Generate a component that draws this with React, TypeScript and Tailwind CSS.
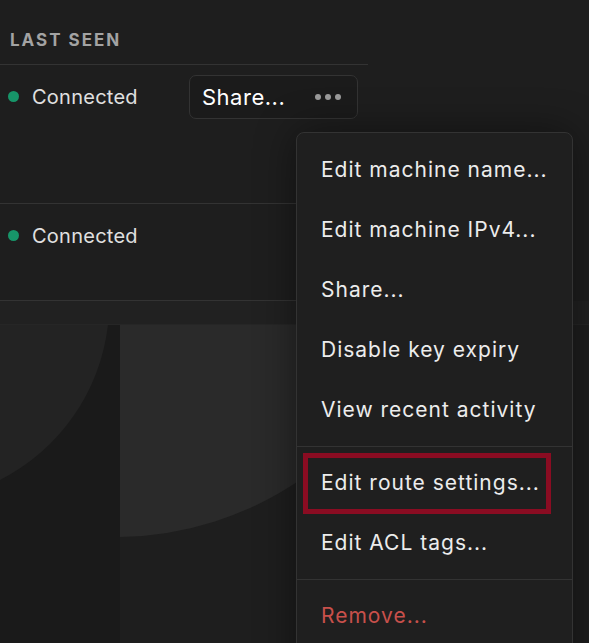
import React from "react";

const items1 = [
  "Edit machine name...",
  "Edit machine IPv4...",
  "Share...",
  "Disable key expiry",
  "View recent activity",
];

function Item({ children, red }: { children: React.ReactNode; red?: boolean }) {
  return (
    <div
      className={`h-[60px] flex items-center pl-[24px] text-[21px] tracking-[1px] ${
        red ? "text-[#c8504b]" : "text-[#ececec]"
      }`}
    >
      {children}
    </div>
  );
}

export default function App() {
  return (
    <div
      className="relative w-[589px] h-[643px] overflow-hidden bg-[#1e1e1e]"
      style={{ fontFamily: "Inter, 'Noto Sans', sans-serif" }}
    >
      <div className="w-[368px]">
        <div className="h-[65px] flex items-end pb-[11px] pl-[10px] border-b border-[#333333]">
          <span className="text-[17px] font-bold tracking-[2px] text-[#a3a3a3]">LAST SEEN</span>
        </div>
        <div className="h-[139px] border-b border-[#333333] flex items-start pt-[10px] pl-[8px]">
          <div className="flex items-center h-[43px] gap-[13px] w-[181px]">
            <span className="w-[11px] h-[11px] rounded-full bg-[#179569]" />
            <span className="text-[20px] tracking-[0.25px] text-[#e0e0e0]">Connected</span>
          </div>
          <div className="flex items-center h-[44px] w-[169px] rounded-[7px] border border-[#333333] bg-[#1b1b1b] pl-[12px] pr-[16px] justify-between">
            <span className="text-[22px] tracking-[0.5px] text-white">Share...</span>
            <span className="flex gap-[4px]">
              <span className="w-[6px] h-[6px] rounded-full bg-[#9b9b9b]" />
              <span className="w-[6px] h-[6px] rounded-full bg-[#9b9b9b]" />
              <span className="w-[6px] h-[6px] rounded-full bg-[#9b9b9b]" />
            </span>
          </div>
        </div>
        <div className="h-[97px] border-b border-[#333333] flex items-start pt-[10px] pl-[8px]">
          <div className="flex items-center h-[43px] gap-[13px]">
            <span className="w-[11px] h-[11px] rounded-full bg-[#179569]" />
            <span className="text-[20px] tracking-[0.25px] text-[#e0e0e0]">Connected</span>
          </div>
        </div>
      </div>
      <div className="h-[24px] bg-[#212121] border-b border-[#262626]" />
      <svg width="589" height="320" className="block">
        <rect x="0" y="0" width="589" height="320" fill="#1e1e1e" />
        <rect x="0" y="0" width="120" height="320" fill="#1a1a1a" />
        <path d="M0 0 L108 0 A200 200 0 0 1 0 155 Z" fill="#232323" />
        <rect x="120" y="0" width="180" height="320" fill="#1e1e1e" />
        <path d="M120 0 L300 0 L300 155 A330 330 0 0 1 120 212 Z" fill="#2a2a2a" />
      </svg>

      {/* menu */}
      <div className="absolute left-[296px] top-[132px] w-[277px] h-[560px] rounded-[8px] border border-[#333333] bg-[#1f1f1f] pt-[7px] shadow-[0_0_40px_rgba(0,0,0,0.45)]">
        {items1.map((t) => (
          <Item key={t}>{t}</Item>
        ))}
        <div className="my-[6px] h-px bg-[#333333]" />
        <Item>Edit route settings...</Item>
        <Item>Edit ACL tags...</Item>
        <div className="my-[6px] h-px bg-[#333333]" />
        <Item red>Remove...</Item>
      </div>
      <div className="absolute left-[303px] top-[453px] w-[248px] h-[61px] border-[5px] border-[#8a0c22]" />
    </div>
  );
}
